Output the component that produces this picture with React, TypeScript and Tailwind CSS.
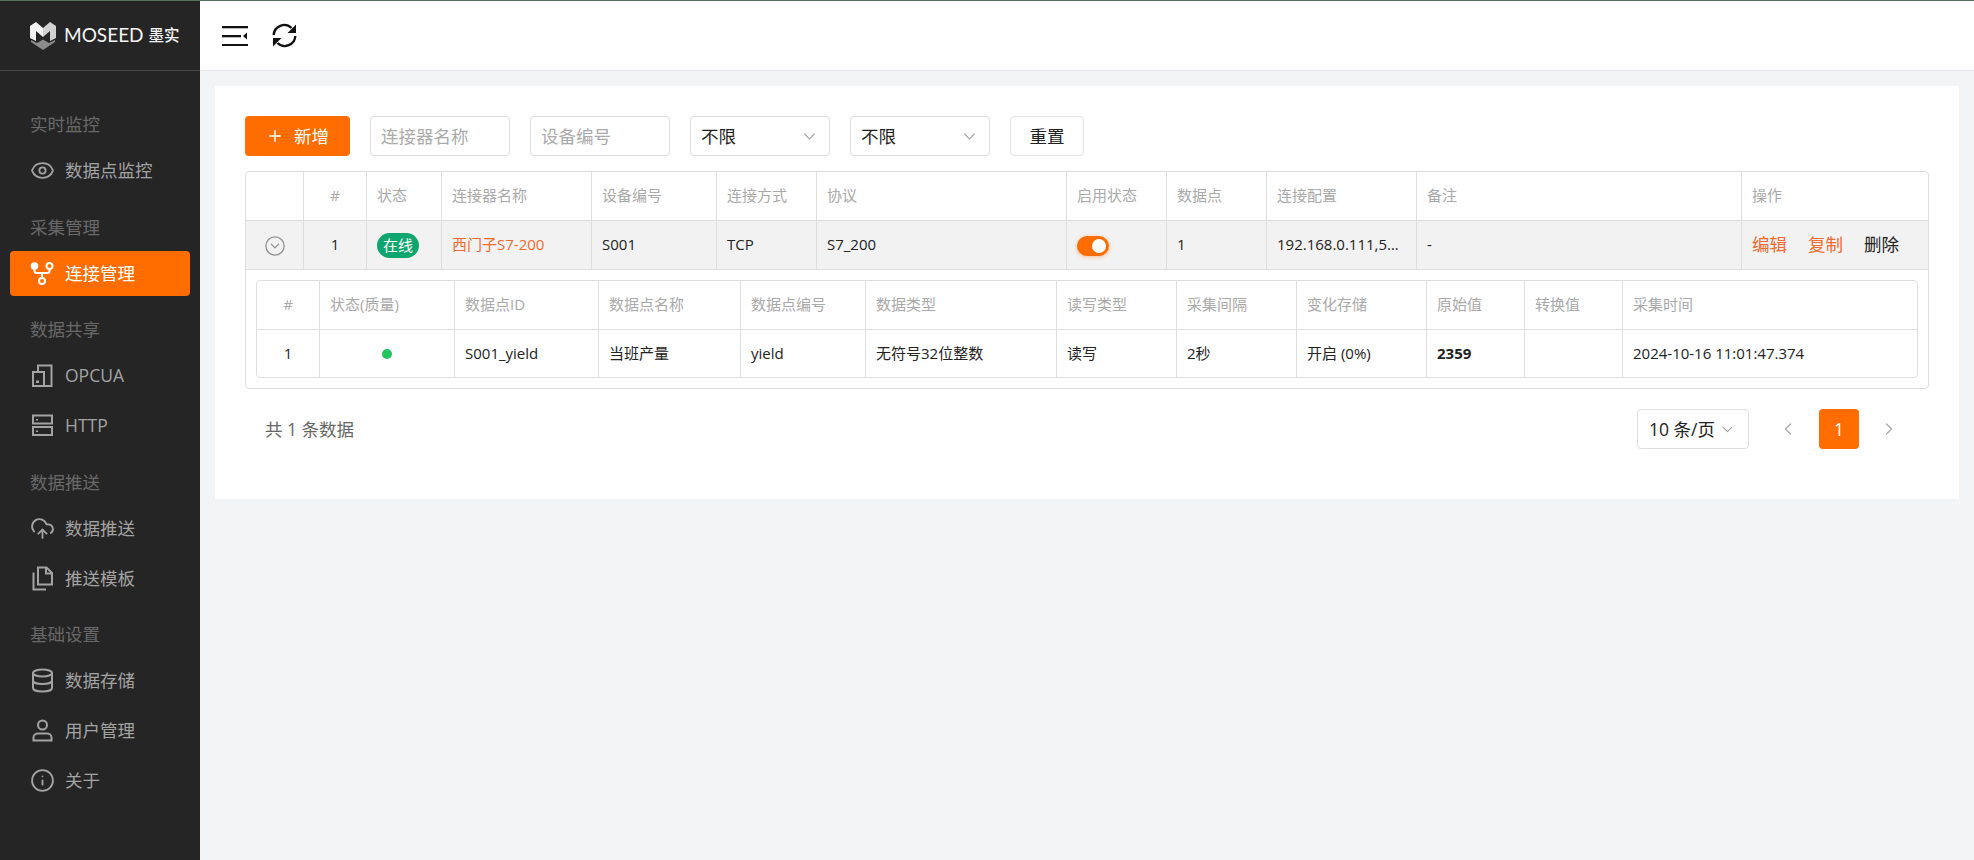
import React from "react";
import { ChevronDown, ChevronLeft, ChevronRight, CircleChevronDown, CloudUpload, Eye, Info, Plus } from "lucide-react";

const Logo = () => (
  <svg viewBox="0 0 26 28" className="w-[26px] h-[28px] shrink-0">
    <path d="M0 4 L6 0 L13 6 V15 L6 9 V19 L0 16 Z" fill="#f4f4f4" />
    <path d="M26 4 L20 0 L13 6 V15 L20 9 V19 L26 16 Z" fill="#d2d2d2" />
    <path d="M1 18 L7 21 L13 17.500 L19 21 L25 18 V20 L13 28 L1 20 Z" fill="#8c8c8c" />
  </svg>
);

const MenuIcon = () => (
  <svg viewBox="0 0 26 20" className="w-[26px] h-[20px]" fill="#111">
    <rect x="0" y="0" width="26" height="2.300" />
    <rect x="0" y="9" width="19" height="2.300" />
    <rect x="0" y="18" width="26" height="2.300" />
    <path d="M25 6.500 V13.500 L21 10 Z" />
  </svg>
);

const RefreshIcon = () => (
  <svg viewBox="0 0 25 25" className="w-[25px] h-[25px]" fill="none" stroke="#111" strokeWidth="2.400">
    <path d="M1.700 12 A10.500 10.500 0 0 1 19.500 5" />
    <path d="M23.300 13 A10.500 10.500 0 0 1 5.500 20" />
    <path d="M24 1.500 V10 H15.500 Z" fill="#111" stroke="none" />
    <path d="M1 23.500 V15 H9.500 Z" fill="#111" stroke="none" />
  </svg>
);

const GitIcon = () => (
  <svg viewBox="0 0 25 25" className="w-[25px] h-[25px]" fill="none" stroke="currentColor" strokeWidth="2">
    <circle cx="4.500" cy="5" r="3.800" fill="currentColor" stroke="none" />
    <circle cx="19.500" cy="5" r="3" />
    <circle cx="12" cy="20" r="3" />
    <path d="M4.500 8 V10 Q4.500 12 6.500 12 H17.500 Q19.500 12 19.500 10 V8 M12 12 V17" />
  </svg>
);

const OpcIcon = () => (
  <svg viewBox="0 0 25 25" className="w-[25px] h-[25px]" fill="none" stroke="currentColor" strokeWidth="2">
    <path d="M3 9 H14 V23 H3 Z M8 9 V2.500 H21.500 V23 H14" />
    <rect x="6" y="17.500" width="3" height="2.500" fill="currentColor" stroke="none" />
  </svg>
);

const ServerIcon = () => (
  <svg viewBox="0 0 25 25" className="w-[25px] h-[25px]" fill="none" stroke="currentColor" strokeWidth="2">
    <rect x="3" y="2.500" width="19" height="8" />
    <rect x="3" y="14" width="19" height="8" />
    <rect x="6" y="6" width="2" height="1.500" fill="currentColor" stroke="none" />
    <rect x="6" y="17.500" width="2" height="1.500" fill="currentColor" stroke="none" />
  </svg>
);

const FilesIcon = () => (
  <svg viewBox="0 0 25 25" className="w-[25px] h-[25px]" fill="none" stroke="currentColor" strokeWidth="2">
    <path d="M8 1.500 H16.500 L22 7 V18.500 H8 Z M16 1.500 V7.500 H22" />
    <path d="M3.500 6.500 V23.500 H16" />
  </svg>
);

const DbIcon = () => (
  <svg viewBox="0 0 25 25" className="w-[25px] h-[25px]" fill="none" stroke="currentColor" strokeWidth="2">
    <ellipse cx="12.500" cy="5" rx="9.500" ry="3.500" />
    <path d="M3 5 V20 C3 22 7 23.500 12.500 23.500 C18 23.500 22 22 22 20 V5" />
    <path d="M3 12.500 C3 14.500 7 16 12.500 16 C18 16 22 14.500 22 12.500" />
  </svg>
);

const UserIcon = () => (
  <svg viewBox="0 0 25 25" className="w-[25px] h-[25px]" fill="none" stroke="currentColor" strokeWidth="2">
    <circle cx="12.500" cy="7" r="4.500" />
    <path d="M3.500 22.500 V19.500 C3.500 17 6 15.500 8 15.500 H17 C19 15.500 21.500 17 21.500 19.500 V22.500 Z" />
  </svg>
);

const iconBox = "w-[25px] h-[25px]";

const menu = [
  { title: "实时监控", pb: "pb-[6px]", items: [{ label: "数据点监控", icon: <Eye className={iconBox} strokeWidth={1.75} /> }] },
  { title: "采集管理", pb: "pb-[5px]", items: [{ label: "连接管理", icon: <GitIcon />, active: true }] },
  {
    title: "数据共享",
    pb: "pb-[6px]",
    items: [
      { label: "OPCUA", icon: <OpcIcon /> },
      { label: "HTTP", icon: <ServerIcon /> },
    ],
  },
  {
    title: "数据推送",
    pb: "pb-[5px]",
    items: [
      { label: "数据推送", icon: <CloudUpload className={iconBox} strokeWidth={1.75} /> },
      { label: "推送模板", icon: <FilesIcon /> },
    ],
  },
  {
    title: "基础设置",
    pb: "pb-0",
    items: [
      { label: "数据存储", icon: <DbIcon /> },
      { label: "用户管理", icon: <UserIcon /> },
      { label: "关于", icon: <Info className={iconBox} strokeWidth={1.75} /> },
    ],
  },
];

const Sidebar = () => (
  <aside className="w-[200px] shrink-0 bg-[#252525] flex flex-col">
    <div className="h-[70px] flex items-center pl-[30px] border-b border-[#4c4c4c]">
      <Logo />
      <span className="ml-[8px] text-[19px] text-[#f5f5f5] font-['Lato',sans-serif]">MOSEED</span>
      <span className="ml-[5px] text-[15.5px] font-medium leading-none text-[#f5f5f5]">墨实</span>
    </div>
    <nav className="pt-[30px]">
      {menu.map((group) => (
        <div key={group.title} className={group.pb}>
          <div className="h-[47px] flex items-center pl-[30px] text-[17.5px] text-[#696969]">{group.title}</div>
          {group.items.map((item) => (
            <div
              key={item.label}
              className={
                item.active
                  ? "mx-[10px] mb-[5px] h-[45px] flex items-center gap-[10px] pl-[20px] rounded-[4px] bg-[#ff6d00] text-[#fff] text-[17.5px]"
                  : "mx-[10px] mb-[5px] h-[45px] flex items-center gap-[10px] pl-[20px] rounded-[4px] text-[#a3a3a3] text-[17.5px]"
              }
            >
              {item.icon}
              <span>{item.label}</span>
            </div>
          ))}
        </div>
      ))}
    </nav>
  </aside>
);

const mainCols = [
  "w-[58px]",
  "w-[63px]",
  "w-[75px]",
  "w-[150px]",
  "w-[125px]",
  "w-[100px]",
  "w-[250px]",
  "w-[100px]",
  "w-[100px]",
  "w-[150px]",
  "w-[325px]",
  "",
];
const mainHead = ["", "#", "状态", "连接器名称", "设备编号", "连接方式", "协议", "启用状态", "数据点", "连接配置", "备注", "操作"];

const subCols = [
  "w-[63px]",
  "w-[135px]",
  "w-[144px]",
  "w-[142px]",
  "w-[125px]",
  "w-[191px]",
  "w-[120px]",
  "w-[120px]",
  "w-[130px]",
  "w-[98px]",
  "w-[98px]",
  "",
];
const subHead = ["#", "状态(质量)", "数据点ID", "数据点名称", "数据点编号", "数据类型", "读写类型", "采集间隔", "变化存储", "原始值", "转换值", "采集时间"];

const thBase = "h-[49px] px-[10px] pb-[2px] font-normal text-[15px] text-[#a9a9a9] border-b border-r border-[#dedede] last:border-r-0";
const tdBase = "h-[49px] px-[10px] pb-[2px] text-[15px] text-[#222] border-b border-r border-[#dedede] last:border-r-0 truncate";
const subTd = "h-[47px] px-[10px] text-[15px] text-[#222] border-r border-[#dedede] last:border-r-0 truncate";

const SelectBox = () => (
  <div className="w-[140px] h-[40px] flex items-center justify-between pl-[10px] pr-[10px] border border-[#dedede] rounded-[4px] text-[17.5px] text-[#222]">
    <span>不限</span>
    <ChevronDown className="w-[19px] h-[19px] text-[#a0a0a0]" strokeWidth={1.5} />
  </div>
);

const MainTable = () => (
  <table className="w-full table-fixed border-separate border-spacing-0">
    <colgroup>
      {mainCols.map((c, i) => (
        <col key={i} className={c} />
      ))}
    </colgroup>
    <thead>
      <tr>
        {mainHead.map((h, i) => (
          <th key={i} className={i === 1 ? thBase + " text-center" : thBase + " text-left"}>
            {h}
          </th>
        ))}
      </tr>
    </thead>
    <tbody>
      <tr className="bg-[#f2f2f2]">
        <td className={tdBase + " !pb-0 text-center"}>
          <CircleChevronDown className="inline-block w-[22px] h-[22px] text-[#8f8f8f]" strokeWidth={1.4} />
        </td>
        <td className={tdBase + " text-center"}>1</td>
        <td className={tdBase + " !pb-0"}>
          <span className="inline-flex items-center justify-center w-[42px] h-[25px] rounded-full bg-[#0fa56e] text-[#fff] text-[15px]">在线</span>
        </td>
        <td className={tdBase + " !text-[#ee6c2f]"}>西门子S7-200</td>
        <td className={tdBase}>S001</td>
        <td className={tdBase}>TCP</td>
        <td className={tdBase}>S7_200</td>
        <td className={tdBase + " !pb-0"}>
          <div className="mt-[1px] w-[32px] h-[20px] rounded-full bg-[#ff6d00] flex items-center justify-end pr-[3px] shadow-[0_1px_4px_rgba(255,109,0,0.4)]">
            <span className="w-[14px] h-[14px] rounded-full bg-[#fff]" />
          </div>
        </td>
        <td className={tdBase}>1</td>
        <td className={tdBase}>192.168.0.111,502,0,1</td>
        <td className={tdBase}>-</td>
        <td className={tdBase}>
          <div className="flex gap-[21px] text-[17.5px]">
            <span className="text-[#ee6c2f]">编辑</span>
            <span className="text-[#ee6c2f]">复制</span>
            <span className="text-[#222]">删除</span>
          </div>
        </td>
      </tr>
    </tbody>
  </table>
);

const SubTable = () => (
  <div className="border border-[#dedede] rounded-[4px] overflow-hidden">
    <table className="w-full table-fixed border-separate border-spacing-0">
      <colgroup>
        {subCols.map((c, i) => (
          <col key={i} className={c} />
        ))}
      </colgroup>
      <thead>
        <tr>
          {subHead.map((h, i) => (
            <th key={i} className={i === 0 ? thBase + " text-center" : thBase + " text-left"}>
              {h}
            </th>
          ))}
        </tr>
      </thead>
      <tbody>
        <tr>
          <td className={subTd + " text-center"}>1</td>
          <td className={subTd + " text-center"}>
            <span className="inline-block w-[10px] h-[10px] rounded-full bg-[#22c55e]" />
          </td>
          <td className={subTd}>S001_yield</td>
          <td className={subTd}>当班产量</td>
          <td className={subTd}>yield</td>
          <td className={subTd}>无符号32位整数</td>
          <td className={subTd}>读写</td>
          <td className={subTd}>2秒</td>
          <td className={subTd}>开启 (0%)</td>
          <td className={subTd + " font-bold"}>2359</td>
          <td className={subTd}></td>
          <td className={subTd}>2024-10-16 11:01:47.374</td>
        </tr>
      </tbody>
    </table>
  </div>
);

export default function App() {
  return (
    <div className="w-screen h-screen overflow-hidden flex flex-col bg-[#f3f4f6] font-['Open_Sans','Noto_Sans_CJK_SC',sans-serif]">
      <div className="h-px bg-[#55705f] shrink-0" />
      <div className="flex-1 flex min-h-0">
        <Sidebar />
        <div className="flex-1 min-w-0">
          <header className="h-[70px] bg-[#fff] border-b border-[#e5e7eb] flex items-center pl-[22px] gap-[24px]">
            <MenuIcon />
            <RefreshIcon />
          </header>
          <main className="p-[15px]">
            <div className="bg-[#fff] pt-[30px] px-[30px] pb-[50px]">
              <div className="flex items-center gap-[20px]">
                <button className="w-[105px] h-[40px] flex items-center justify-center gap-[10px] rounded-[4px] bg-[#ff6d00] text-[#fff] text-[17.5px]">
                  <Plus className="w-[18px] h-[18px]" strokeWidth={2} />
                  新增
                </button>
                <input
                  placeholder="连接器名称"
                  className="w-[140px] h-[40px] px-[10px] border border-[#dedede] rounded-[4px] text-[17.5px] placeholder:text-[#aaa]"
                />
                <input
                  placeholder="设备编号"
                  className="w-[140px] h-[40px] px-[10px] border border-[#dedede] rounded-[4px] text-[17.5px] placeholder:text-[#aaa]"
                />
                <SelectBox />
                <SelectBox />
                <button className="w-[74px] h-[40px] border border-[#e4e4e4] rounded-[4px] text-[17.5px] text-[#222]">重置</button>
              </div>
              <div className="mt-[15px] border border-[#dedede] rounded-[4px] overflow-hidden">
                <MainTable />
                <div className="p-[10px]">
                  <SubTable />
                </div>
              </div>
              <div className="mt-[20px] h-[40px] flex items-center pl-[20px]">
                <span className="text-[17.5px] text-[#666]">共 1 条数据</span>
                <div className="ml-auto flex items-center">
                  <div className="w-[112px] h-[40px] flex items-center pl-[11px] border border-[#dedede] rounded-[4px] text-[17.5px] text-[#222]">
                    <span>10 条/页</span>
                    <ChevronDown className="ml-[4px] w-[17px] h-[17px] text-[#a0a0a0]" strokeWidth={1.5} />
                  </div>
                  <ChevronLeft className="ml-[29px] w-[20px] h-[20px] text-[#a8a8a8]" strokeWidth={1.5} />
                  <div className="ml-[21px] w-[40px] h-[40px] flex items-center justify-center rounded-[4px] bg-[#ff6d00] text-[#fff] text-[17.5px]">1</div>
                  <ChevronRight className="ml-[20px] mr-[30px] w-[20px] h-[20px] text-[#a8a8a8]" strokeWidth={1.5} />
                </div>
              </div>
            </div>
          </main>
        </div>
      </div>
    </div>
  );
}
